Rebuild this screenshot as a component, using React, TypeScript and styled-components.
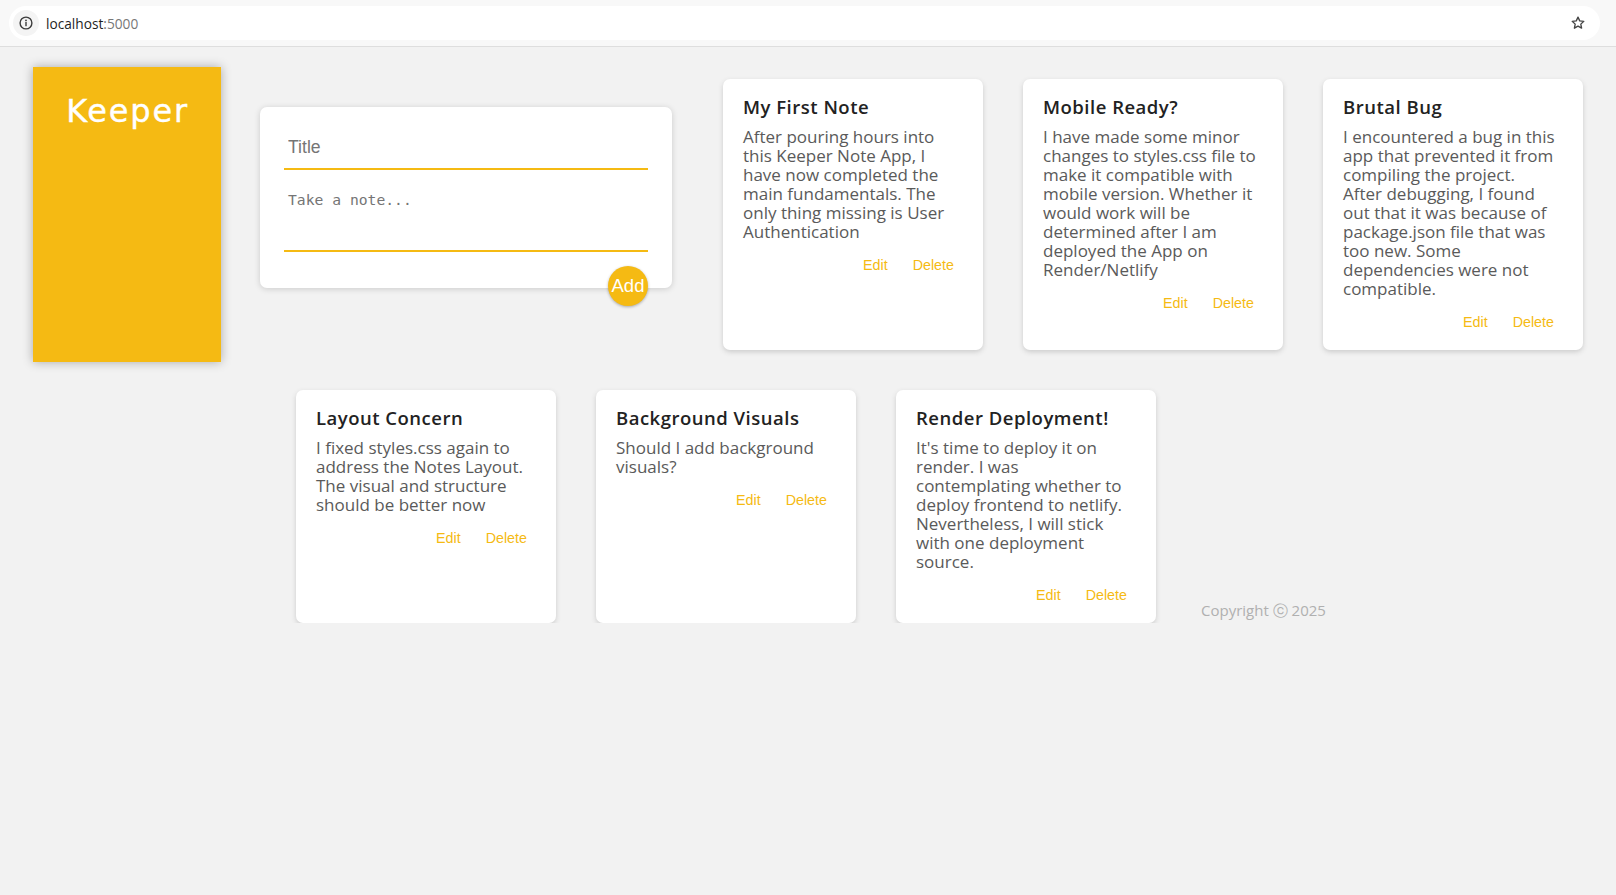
import React from "react";
import styled, { createGlobalStyle } from "styled-components";

const GlobalStyle = createGlobalStyle`
  html, body {
    margin: 0;
    padding: 0;
    background: #f2f2f2;
  }
  * { box-sizing: border-box; }
`;

const YELLOW = "#f5ba13";

const BrowserBar = styled.div`
  height: 47px;
  background: #f8f8f8;
  border-bottom: 1px solid #dedede;
  padding: 6px 16px 0 9px;
`;

const UrlPill = styled.div`
  height: 34px;
  background: #ffffff;
  border-radius: 17px;
  display: flex;
  align-items: center;
  padding: 0 14px 0 4px;
`;

const InfoChip = styled.div`
  width: 26px;
  height: 26px;
  border-radius: 50%;
  background: #f4f4f4;
  display: flex;
  align-items: center;
  justify-content: center;
  margin-right: 7px;
`;

const UrlText = styled.span`
  font-family: "Open Sans", "Noto Sans", sans-serif;
  font-size: 13.7px;
  color: #1f1f1f;
  flex: 1;
`;

const UrlPort = styled.span`
  color: #777;
`;

const Page = styled.div`
  display: flex;
  align-items: flex-start;
  padding: 0 0 0 33px;
`;

const Header = styled.header`
  width: 188px;
  height: 295px;
  margin-top: 20px;
  background: ${YELLOW};
  box-shadow: 0 0 10px 0 rgba(0, 0, 0, 0.3);
  padding-top: 27px;
  flex-shrink: 0;
`;

const Logo = styled.h1`
  margin: 0;
  text-align: center;
  color: #ffffff;
  font-family: "DejaVu Sans", sans-serif;
  font-weight: 400;
  font-size: 32px;
  line-height: 35px;
  letter-spacing: 1.8px;
  padding-left: 1px;
  -webkit-text-stroke: 0.4px #ffffff;
`;

const Main = styled.main`
  display: flex;
  flex-direction: column;
  gap: 40px;
  margin-left: 39px;
  padding-top: 32px;
`;

const Row = styled.div<{ $indent?: number }>`
  display: flex;
  align-items: stretch;
  gap: 40px;
  padding-left: ${(p) => p.$indent ?? 0}px;
`;

const Form = styled.form`
  position: relative;
  align-self: flex-start;
  width: 412px;
  height: 181px;
  margin-top: 28px;
  margin-right: 11px;
  background: #ffffff;
  border-radius: 7px;
  box-shadow: 0 1px 6px rgba(0, 0, 0, 0.16);
  padding: 20px 24px 0;
  display: flex;
  flex-direction: column;
`;

const TitleInput = styled.input`
  width: 100%;
  border: none;
  border-bottom: 2px solid ${YELLOW};
  outline: none;
  padding: 10px 4px;
  height: 42.5px;
  font-family: "Liberation Sans", Arial, sans-serif;
  font-size: 17.6px;
  color: #333;
  background: transparent;
  &::placeholder { color: #757575; }
`;

const NoteArea = styled.textarea`
  width: 100%;
  height: 82px;
  border: none;
  border-bottom: 2px solid ${YELLOW};
  outline: none;
  resize: none;
  padding: 21px 4px 0;
  font-family: "DejaVu Sans Mono", "Liberation Mono", monospace;
  font-size: 14.7px;
  line-height: 17px;
  color: #333;
  background: transparent;
  &::placeholder { color: #757575; }
`;

const AddButton = styled.button`
  position: absolute;
  right: 24px;
  bottom: -18px;
  width: 40px;
  height: 40px;
  border-radius: 50%;
  border: none;
  background: ${YELLOW};
  color: #ffffff;
  font-family: "Liberation Sans", Arial, sans-serif;
  font-size: 18.5px;
  padding: 0;
  box-shadow: 0 1px 3px rgba(0, 0, 0, 0.3);
  display: flex;
  align-items: center;
  justify-content: center;
`;

const Card = styled.div`
  width: 260px;
  background: #ffffff;
  border-radius: 7px;
  box-shadow: 0 2px 5px #cccccc;
  padding: 16px 20px 10px;
  display: flex;
  flex-direction: column;
  flex-shrink: 0;
`;

const CardTitle = styled.h2`
  margin: 0 0 8px;
  font-family: "Open Sans", sans-serif;
  font-weight: 600;
  font-size: 18.5px;
  line-height: 24px;
  letter-spacing: 0.5px;
  color: #222222;
`;

const CardBody = styled.p`
  margin: 0;
  font-family: "Open Sans", sans-serif;
  font-size: 17px;
  line-height: 19px;
  color: #5a5a5a;
  white-space: pre-wrap;
  word-wrap: break-word;
`;

const Actions = styled.div`
  display: flex;
  justify-content: flex-end;
  gap: 25px;
  margin-top: 6px;
  padding-right: 9px;
`;

const ActionButton = styled.button`
  height: 36px;
  border: none;
  background: none;
  padding: 0;
  color: ${YELLOW};
  font-family: "Liberation Sans", Arial, sans-serif;
  font-size: 14.3px;
  cursor: pointer;
`;

const Footer = styled.footer`
  align-self: flex-end;
  margin-left: 5px;
  margin-bottom: 2px;
  font-family: "Open Sans", sans-serif;
  font-size: 15px;
  color: #b0b0b0;
`;

type Note = { title: string; body: string[] };

const row1: Note[] = [
  {
    title: "My First Note",
    body: [
      "After pouring hours into",
      "this Keeper Note App, I",
      "have now completed the",
      "main fundamentals. The",
      "only thing missing is User",
      "Authentication",
    ],
  },
  {
    title: "Mobile Ready?",
    body: [
      "I have made some minor",
      "changes to styles.css file to",
      "make it compatible with",
      "mobile version. Whether it",
      "would work will be",
      "determined after I am",
      "deployed the App on",
      "Render/Netlify",
    ],
  },
  {
    title: "Brutal Bug",
    body: [
      "I encountered a bug in this",
      "app that prevented it from",
      "compiling the project.",
      "After debugging, I found",
      "out that it was because of",
      "package.json file that was",
      "too new. Some",
      "dependencies were not",
      "compatible.",
    ],
  },
];

const row2: Note[] = [
  {
    title: "Layout Concern",
    body: [
      "I fixed styles.css again to",
      "address the Notes Layout.",
      "The visual and structure",
      "should be better now",
    ],
  },
  {
    title: "Background Visuals",
    body: ["Should I add background", "visuals?"],
  },
  {
    title: "Render Deployment!",
    body: [
      "It's time to deploy it on",
      "render. I was",
      "contemplating whether to",
      "deploy frontend to netlify.",
      "Nevertheless, I will stick",
      "with one deployment",
      "source.",
    ],
  },
];

const NoteCard = ({ note }: { note: Note }) => (
  <Card>
    <CardTitle>{note.title}</CardTitle>
    <CardBody>{note.body.join("\n")}</CardBody>
    <Actions>
      <ActionButton>Edit</ActionButton>
      <ActionButton>Delete</ActionButton>
    </Actions>
  </Card>
);

const InfoIcon = () => (
  <svg width="14" height="14" viewBox="0 0 14 14">
    <circle cx="7" cy="7" r="5.9" fill="none" stroke="#3c3c3c" strokeWidth="1.4" />
    <circle cx="7" cy="4.4" r="0.9" fill="#3c3c3c" />
    <rect x="6.3" y="6" width="1.4" height="4.2" fill="#3c3c3c" />
  </svg>
);

const StarIcon = () => (
  <svg width="16" height="16" viewBox="0 0 24 24">
    <path
      d="M12 3.2l2.6 5.6 6.1.7-4.5 4.2 1.2 6.1L12 16.8l-5.4 3 1.2-6.1-4.5-4.2 6.1-.7z"
      fill="none"
      stroke="#444"
      strokeWidth="2"
      strokeLinejoin="round"
    />
  </svg>
);

export default function App() {
  return (
    <>
      <GlobalStyle />
      <BrowserBar>
        <UrlPill>
          <InfoChip>
            <InfoIcon />
          </InfoChip>
          <UrlText>
            localhost<UrlPort>:5000</UrlPort>
          </UrlText>
          <StarIcon />
        </UrlPill>
      </BrowserBar>
      <Page>
        <Header>
          <Logo>Keeper</Logo>
        </Header>
        <Main>
          <Row>
            <Form onSubmit={(e) => e.preventDefault()}>
              <TitleInput name="title" placeholder="Title" />
              <NoteArea name="content" placeholder="Take a note..." rows={3} />
              <AddButton type="submit">Add</AddButton>
            </Form>
            {row1.map((n) => (
              <NoteCard key={n.title} note={n} />
            ))}
          </Row>
          <Row $indent={36}>
            {row2.map((n) => (
              <NoteCard key={n.title} note={n} />
            ))}
            <Footer>Copyright ⓒ 2025</Footer>
          </Row>
        </Main>
      </Page>
    </>
  );
}
